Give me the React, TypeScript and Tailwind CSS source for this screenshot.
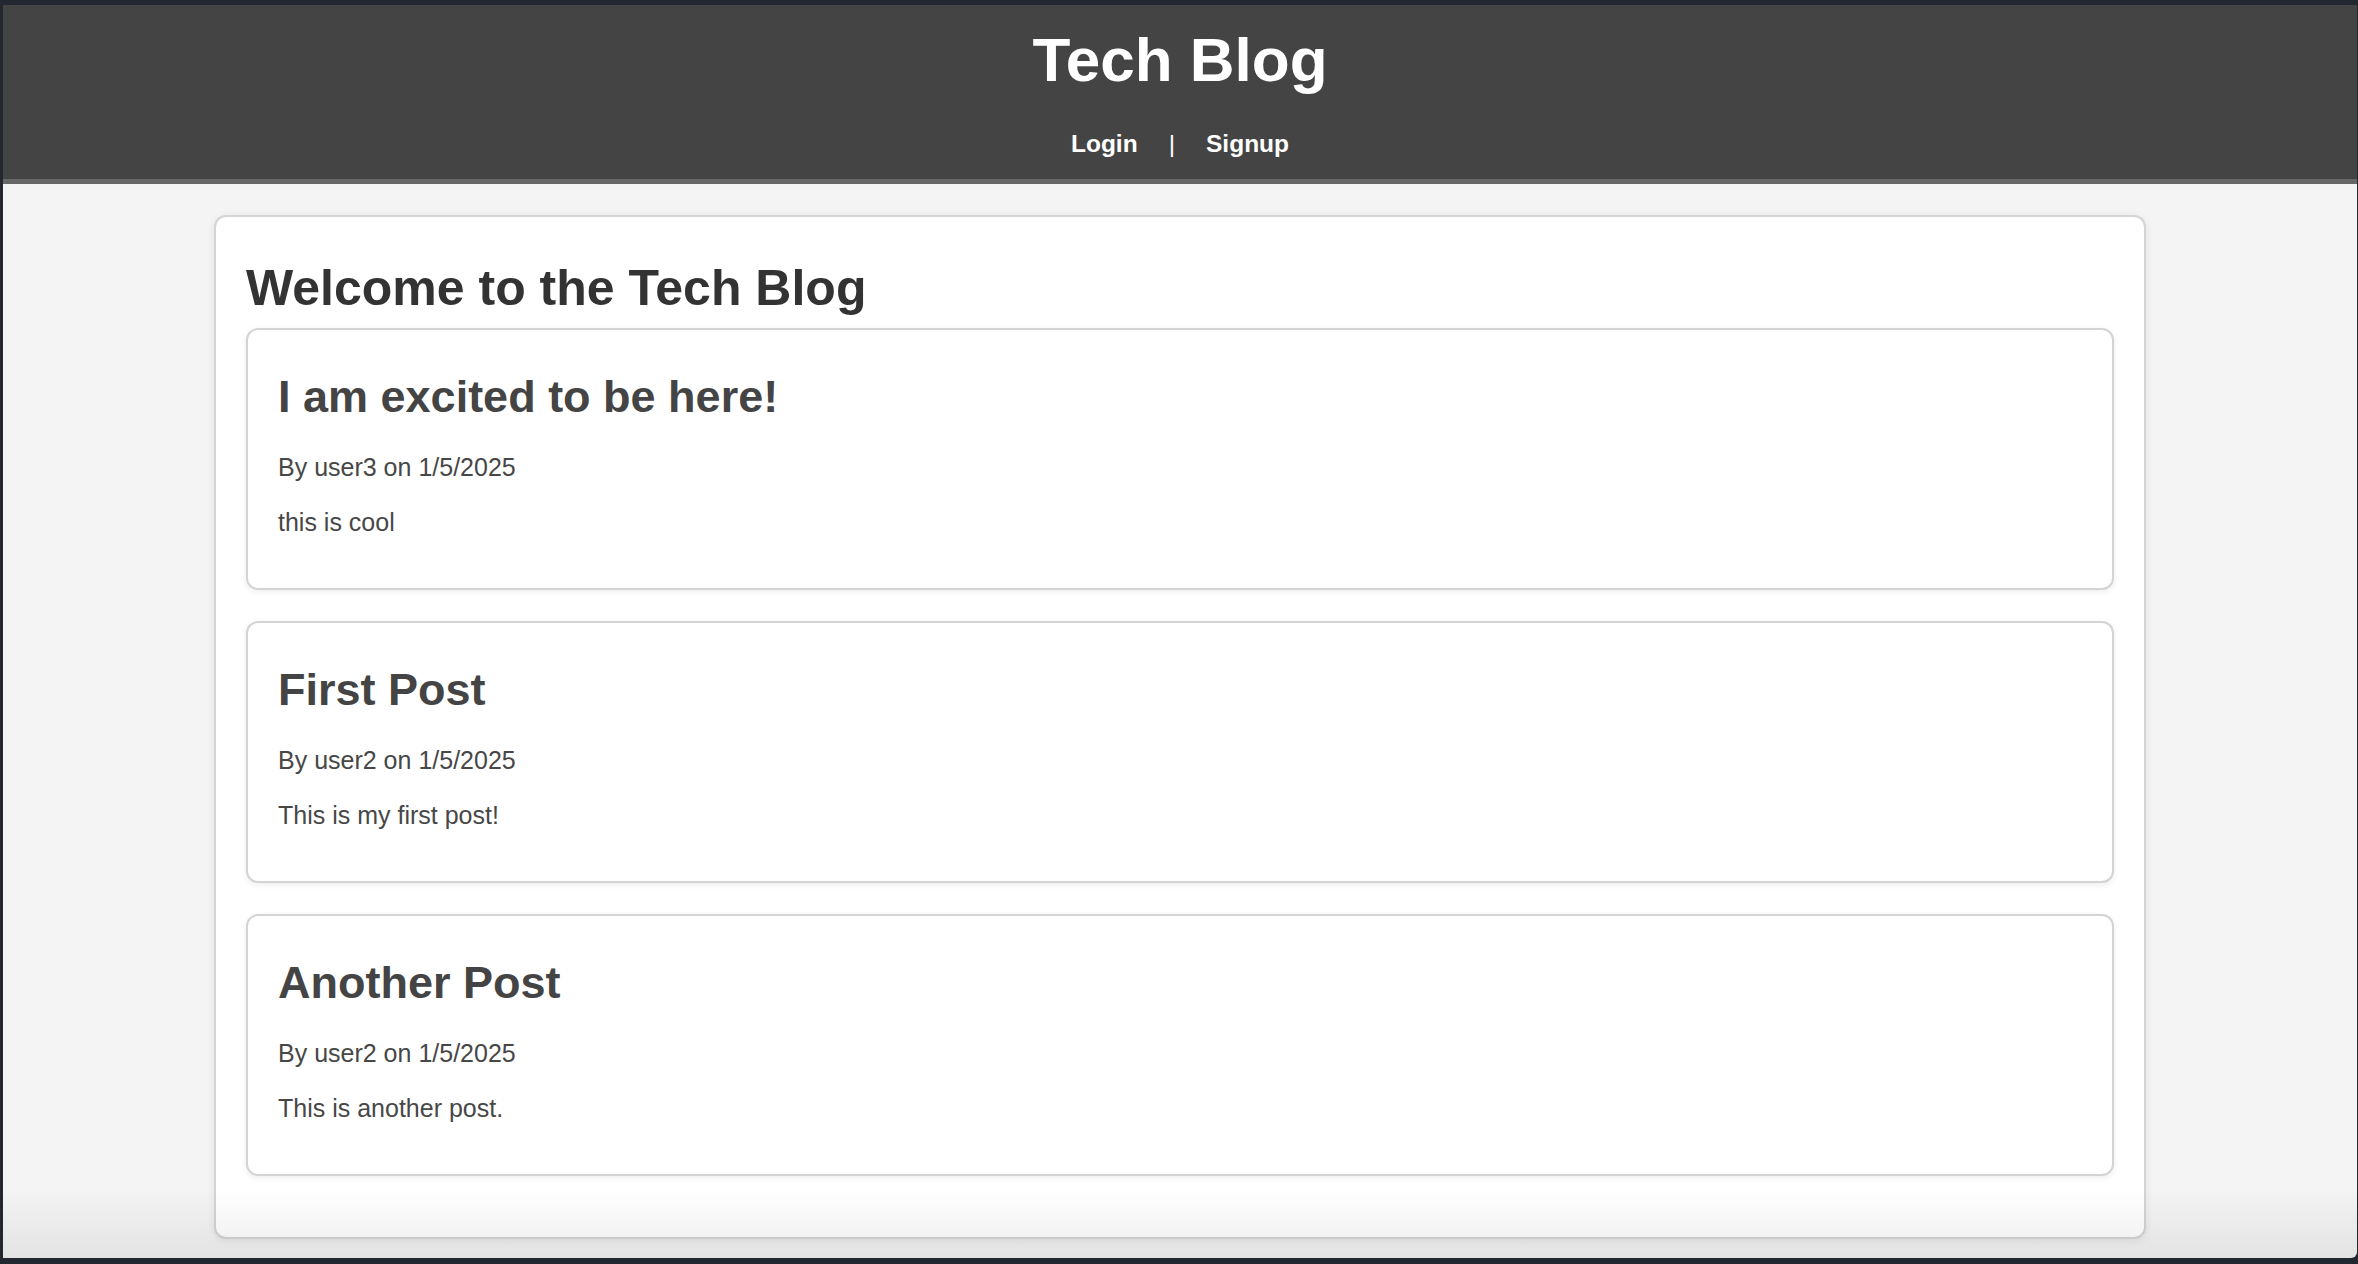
import React from "react";

const posts = [
  { title: "I am excited to be here!", author: "user3", date: "1/5/2025", body: "this is cool" },
  { title: "First Post", author: "user2", date: "1/5/2025", body: "This is my first post!" },
  { title: "Another Post", author: "user2", date: "1/5/2025", body: "This is another post." },
];

export default function App() {
  return (
    <div
      className="w-[2358px] h-[1264px] bg-[#232830] pt-[5px] pl-[3px] pr-[1px] pb-[6px] overflow-hidden"
      style={{ fontFamily: '"Liberation Sans", Arial, Helvetica, sans-serif' }}
    >
      <div className="relative h-full flex flex-col bg-[#f4f4f4] rounded-br-[6px] overflow-hidden">
        <header className="bg-[#444444] border-b-[5px] border-[#676767] pt-[20px] pb-[21px] flex flex-col items-center">
          <h1 className="text-white font-bold text-[62px] leading-[70px] m-0">Tech Blog</h1>
          <nav className="mt-[35px] flex items-center gap-[31px] text-white font-bold text-[24.5px] leading-[28px]">
            <a>Login</a>
            <span className="font-normal">|</span>
            <a>Signup</a>
          </nav>
        </header>

        <main className="flex-1 pt-[31px]">
          <section className="w-[1932px] mx-auto bg-white border-2 border-[#d4d4d4] rounded-[12px] shadow-[0_2px_8px_rgba(0,0,0,0.08)] px-[30px] pt-[31px] pb-[61px]">
            <h2 className="text-[#333333] font-bold text-[50px] leading-[80px]">Welcome to the Tech Blog</h2>
            <div className="flex flex-col gap-[31px]">
              {posts.map((p) => (
                <article
                  key={p.title}
                  className="border-2 border-[#d4d4d4] rounded-[12px] shadow-[0_2px_6px_rgba(0,0,0,0.07)] px-[30px] pt-[30px] pb-[30px] bg-white"
                >
                  <h3 className="text-[#444444] font-bold text-[45px] leading-[52px] mt-[11px] mb-[30px]">
                    {p.title}
                  </h3>
                  <p className="text-[#474747] text-[25px] leading-[28px] mb-[27px]">
                    By {p.author} on {p.date}
                  </p>
                  <p className="text-[#474747] text-[25px] leading-[28px] mb-[22px]">{p.body}</p>
                </article>
              ))}
            </div>
          </section>
        </main>

        <div className="pointer-events-none absolute left-0 right-0 bottom-0 h-[70px] bg-gradient-to-t from-black/[0.07] to-transparent" />
      </div>
    </div>
  );
}
